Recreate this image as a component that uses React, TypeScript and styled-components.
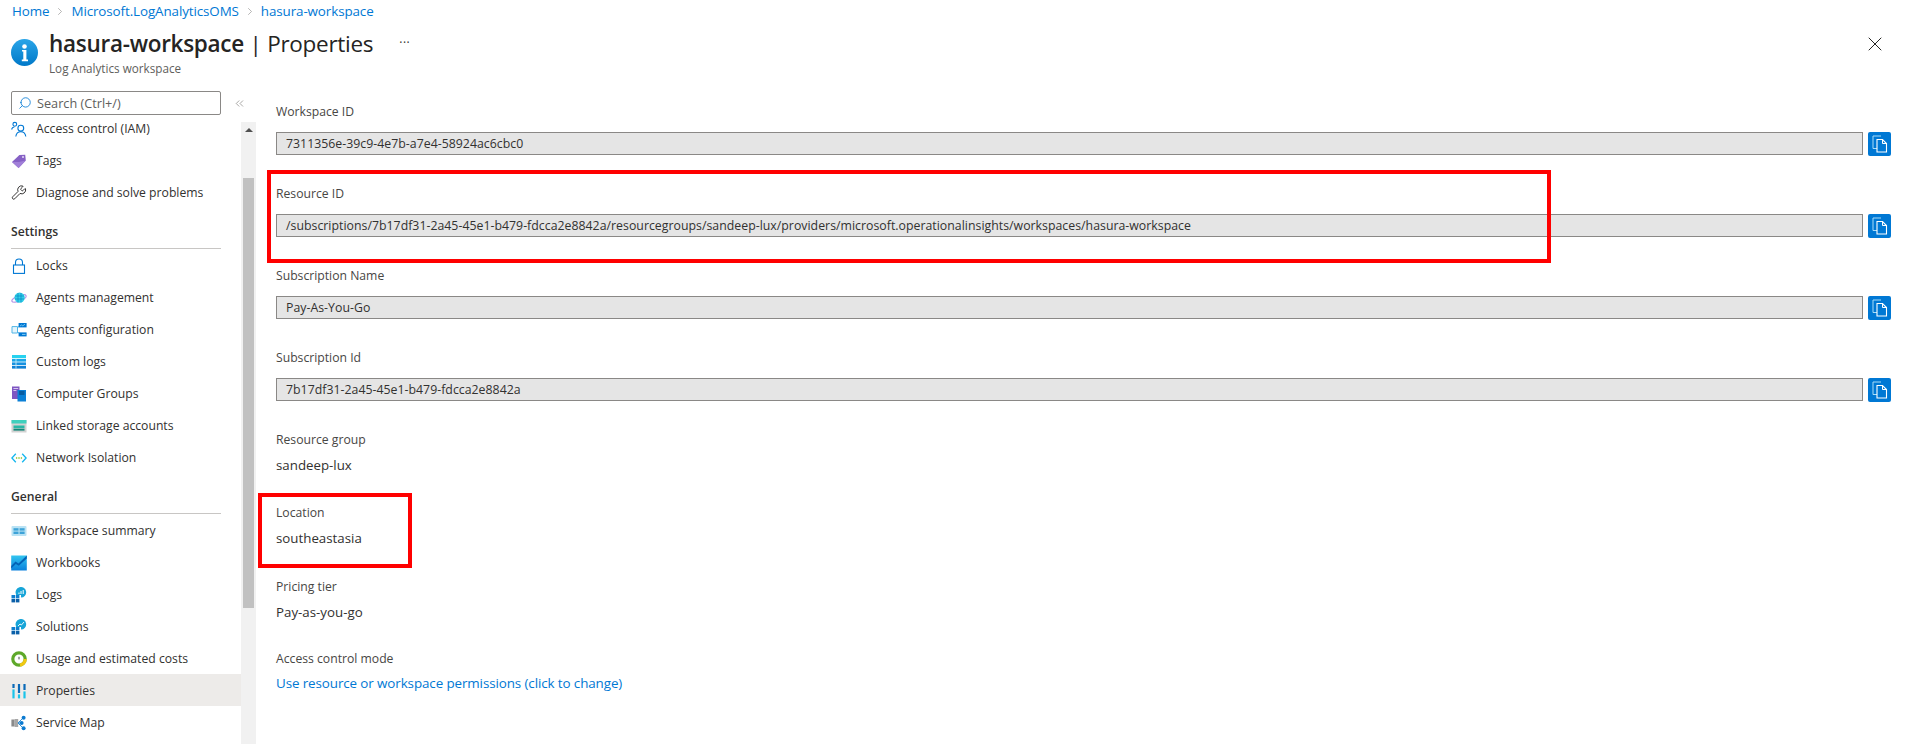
import React from "react";
import styled, { createGlobalStyle } from "styled-components";
import { ChevronRight, ChevronsLeft, Search, Wrench, X } from "lucide-react";

const Global = createGlobalStyle`
  html, body { margin: 0; padding: 0; background: #fff; }
  body { font-family: "Open Sans", "Noto Sans", "Liberation Sans", sans-serif; color: #323130; }
  * { box-sizing: border-box; }
`;

const Page = styled.div`
  width: 1906px;
  height: 744px;
  overflow: hidden;
  display: flex;
  flex-direction: column;
  background: #fff;
`;
const Breadcrumb = styled.nav`
  height: 22px;
  padding-left: 12px;
  display: flex;
  align-items: center;
  gap: 5px;
  font-size: 13.4px;
  color: #0078d4;
`;
const Crumb = styled.a`
  color: #0078d4;
  letter-spacing: -0.1px;
`;
const CrumbSep = styled.span`
  display: flex;
  width: 12px;
  justify-content: center;
  color: #8a8886;
`;
const Header = styled.header`
  height: 47px;
  display: flex;
  align-items: flex-start;
  padding-left: 11px;
  padding-right: 19px;
`;
const InfoBadge = styled.div`
  width: 27px;
  height: 27px;
  margin-top: 17px;
  flex: none;
`;
const TitleBlock = styled.div`
  margin-left: 11px;
  margin-top: 7px;
`;
const Title = styled.h1`
  margin: 0;
  font-size: 22.5px;
  line-height: 30px;
  font-weight: 400;
  color: #252423;
  white-space: nowrap;
  letter-spacing: -0.28px;
`;
const TitleStrong = styled.span`
  font-weight: 600;
`;
const Subtitle = styled.div`
  font-size: 11.7px;
  line-height: 16px;
  margin-top: 1px;
  color: #605e5c;
`;
const More = styled.div`
  margin-left: 26px;
  margin-top: 11px;
  font-size: 12px;
  line-height: 20px;
  letter-spacing: 0.5px;
  color: #323130;
`;
const CloseBtn = styled.div`
  margin-left: auto;
  margin-top: 10px;
  display: flex;
  color: #252423;
`;
const Body = styled.div`
  flex: 1;
  min-height: 0;
  display: flex;
`;
const Side = styled.aside`
  width: 256px;
  flex: none;
  display: flex;
  flex-direction: column;
  min-height: 0;
`;
const SearchRow = styled.div`
  display: flex;
  align-items: center;
  padding-left: 11px;
  margin-top: 22px;
  position: relative;
  z-index: 1;
`;
const SearchBox = styled.div`
  width: 210px;
  height: 24px;
  border: 1px solid #8a8886;
  border-radius: 2px;
  background: #fff;
  display: flex;
  align-items: center;
  gap: 5px;
  padding-left: 6px;
  font-size: 12.7px;
  color: #605e5c;
`;
const SearchGlyph = styled(Search)`
  transform: scaleX(-1);
  color: #0078d4;
`;
const Collapse = styled.div`
  margin-left: 12px;
  display: flex;
  color: #605e5c;
`;
const SideBody = styled.div`
  flex: 1;
  min-height: 0;
  margin-top: -3px;
  display: flex;
`;
const Menu = styled.div`
  width: 241px;
  flex: none;
  overflow: hidden;
`;
const Row = styled.div<{ $active?: boolean }>`
  height: 32px;
  display: flex;
  align-items: center;
  gap: 9px;
  padding: 1px 0 0 11px;
  font-size: 12.2px;
  color: #323130;
  white-space: nowrap;
  background: ${(p) => (p.$active ? "#edebe9" : "transparent")};
`;
const RowIcon = styled.span`
  width: 16px;
  height: 16px;
  flex: none;
  display: flex;
  align-items: center;
  justify-content: center;
`;
const Section = styled.div`
  height: 41px;
  margin: 0 20px 0 11px;
  padding-top: 15px;
  border-bottom: 1px solid #c8c6c4;
  font-size: 12.2px;
  line-height: 18px;
  font-weight: 600;
  color: #323130;
`;
const Track = styled.div`
  width: 15px;
  flex: none;
  margin-top: 10px;
  background: #f1f1f1;
  display: flex;
  flex-direction: column;
  align-items: center;
`;
const TrackArrow = styled.div`
  margin-top: 6px;
  width: 0;
  height: 0;
  border-left: 4px solid transparent;
  border-right: 4px solid transparent;
  border-bottom: 4px solid #505050;
`;
const Thumb = styled.div`
  margin-top: 46px;
  width: 11px;
  height: 430px;
  background: #c1c1c1;
`;
const Main = styled.main`
  flex: 1;
  min-width: 0;
  position: relative;
  padding: 33px 15px 0 20px;
`;
const Field = styled.section`
  height: 82px;
`;
const Label = styled.div`
  font-size: 12.2px;
  line-height: 20px;
  color: #484644;
`;
const CopyRow = styled.div`
  margin-top: 10px;
  display: flex;
  gap: 5px;
  align-items: flex-start;
`;
const ReadOnly = styled.div`
  flex: 1;
  height: 23px;
  border: 1px solid #8a8886;
  background: #e5e5e5;
  padding-left: 9px;
  font-size: 12.3px;
  line-height: 21px;
  color: #323130;
  white-space: nowrap;
  overflow: hidden;
  letter-spacing: 0.02px;
`;
const CopyBtn = styled.button`
  width: 23px;
  height: 24px;
  padding: 0;
  border: none;
  border-radius: 2px;
  background: #0078d4;
  display: flex;
  align-items: center;
  justify-content: center;
`;
const Plain = styled.section<{ $height: number }>`
  height: ${(p) => p.$height}px;
`;
const Value = styled.div`
  margin-top: 5px;
  font-size: 13.3px;
  line-height: 20px;
  color: #323130;
`;
const LinkValue = styled.a`
  display: block;
  margin-top: 4px;
  font-size: 13.4px;
  line-height: 20px;
  color: #0078d4;
  letter-spacing: -0.1px;
`;
const Callout = styled.div<{ $l: number; $t: number; $w: number; $h: number }>`
  position: absolute;
  left: ${(p) => p.$l}px;
  top: ${(p) => p.$t}px;
  width: ${(p) => p.$w}px;
  height: ${(p) => p.$h}px;
  border: 4px solid #ff0000;
  pointer-events: none;
`;

const Svg: React.FC<{ children: React.ReactNode; s?: number }> = ({ children, s = 16 }) => (
  <svg width={s} height={s} viewBox="0 0 16 16" fill="none">{children}</svg>
);

const InfoIcon = () => (
  <svg width="27" height="27" viewBox="0 0 27 27">
    <defs>
      <linearGradient id="ig" x1="0" y1="0" x2="0" y2="1">
        <stop offset="0" stopColor="#2aa5e8" />
        <stop offset="1" stopColor="#0078c8" />
      </linearGradient>
    </defs>
    <circle cx="13.5" cy="13.5" r="13.5" fill="url(#ig)" />
    <circle cx="13.5" cy="7.5" r="2.3" fill="#fff" />
    <path d="M11 11h4.4v9.6H17v1.6h-6.2v-1.6h1.5v-8H11z" fill="#fff" />
  </svg>
);
const IamIcon = () => (
  <Svg>
    <g stroke="#0078d4" strokeWidth="1.1">
      <circle cx="3.8" cy="3.3" r="1.9" />
      <path d="M0.6 8.5C1 6.8 2 6 3.4 6" />
      <circle cx="9.8" cy="7.2" r="2.9" />
      <path d="M4.8 15.5c.4-3 2.3-4.8 5-4.8s4.6 1.8 5 4.8" />
    </g>
  </Svg>
);
const TagIcon = () => (
  <Svg>
    <path d="M1 8.6 8.4 1.6 14.2 1.2 14.8 7 7.6 14.6 Z" fill="#8661c5" transform="translate(0 0.5)" />
    <path d="M1 9.1 7.6 15.1 14.8 7.5 8 9Z" fill="#a17fd8" />
    <circle cx="12" cy="4" r="1" fill="#e5dbf5" />
  </Svg>
);
const LockIcon = () => (
  <Svg>
    <path d="M4.5 7V4.5a3.5 3.5 0 0 1 7 0V7" stroke="#0078d4" strokeWidth="1.1" />
    <rect x="2.5" y="7" width="11" height="8.4" stroke="#0078d4" strokeWidth="1.1" />
  </Svg>
);
const AgentsMgmtIcon = () => (
  <Svg>
    <ellipse cx="8" cy="8.5" rx="7.6" ry="2.6" transform="rotate(-22 8 8.5)" stroke="#b796e6" strokeWidth="1.2" />
    <circle cx="8.6" cy="7.6" r="5.2" fill="#32d0e8" />
    <path d="M4 6h9M4 9h9M7 3v9.5M10 3v9.5" stroke="#0a88c4" strokeWidth=".7" />
  </Svg>
);
const AgentsConfigIcon = () => (
  <Svg>
    <path d="M1 4.6h5.5v6.4H1z" fill="#e6f5fc" stroke="#50b5e6" />
    <path d="M6 6 9 3.6M6 9.5l3 2.5" stroke="#50b5e6" />
    <rect x="7.6" y="1" width="8" height="4.4" fill="#0078d4" />
    <rect x="7.6" y="10.4" width="8" height="4" fill="#0078d4" />
    <path d="M9 4l1.5-1 1.3.8L14 2.2" stroke="#9fe0f8" strokeWidth=".7" />
    <path d="M11 12.4h3.5" stroke="#9fe0f8" strokeWidth=".8" />
  </Svg>
);
const LogsTableIcon = () => (
  <Svg>
    <rect x="1" y="1" width="14" height="3.2" fill="#27d2ef" />
    <rect x="1" y="5" width="14" height="2.6" fill="#1aa5e8" />
    <rect x="1" y="8.4" width="14" height="2.6" fill="#1591e0" />
    <rect x="1" y="11.8" width="14" height="2.8" fill="#0f80d4" />
    <rect x="4.6" y="5" width=".8" height="9.6" fill="#c8eefb" />
  </Svg>
);
const ComputerIcon = () => (
  <Svg>
    <rect x="1" y="0.5" width="7.5" height="12.5" fill="#7e56c2" />
    <path d="M2.4 2.5h4.8M2.4 4.5h3" stroke="#e0d4f4" strokeWidth=".9" />
    <rect x="6.5" y="4" width="8.5" height="11.5" fill="#0b80d6" />
    <path d="M8 6h5.5M8 8h5.5" stroke="#063b6e" strokeWidth="1" />
  </Svg>
);
const StorageIcon = () => (
  <Svg>
    <rect x="0.5" y="2" width="15" height="12.5" fill="#d2d2d2" />
    <rect x="0.5" y="2" width="15" height="3.5" fill="#3fd0bd" />
    <rect x="2.5" y="7.5" width="11" height="2.8" fill="#27b8a6" />
    <rect x="2.5" y="10.8" width="11" height="1.8" fill="#128778" />
  </Svg>
);
const NetworkIcon = () => (
  <Svg>
    <path d="M4.8 3.8.9 8l3.9 4.2M11.2 3.8 15.1 8l-3.9 4.2" stroke="#14b7ee" strokeWidth="1.3" />
    <circle cx="5.6" cy="8" r=".8" fill="#7fba00" />
    <circle cx="8" cy="8" r=".8" fill="#7fba00" />
    <circle cx="10.4" cy="8" r=".8" fill="#7fba00" />
  </Svg>
);
const SummaryIcon = () => (
  <Svg>
    <rect x="0.5" y="3" width="15" height="10" rx="1" fill="#b9e2f4" />
    <rect x="2.5" y="5.2" width="5" height="2.4" fill="#3ea3d8" />
    <rect x="8.6" y="5.2" width="5" height="2.4" fill="#3ea3d8" />
    <rect x="2.5" y="8.6" width="5" height="2.4" fill="#3ea3d8" />
    <rect x="8.6" y="8.6" width="5" height="2.4" fill="#3ea3d8" />
  </Svg>
);
const WorkbooksIcon = () => (
  <Svg>
    <defs>
      <linearGradient id="wb" x1="0" y1="0" x2="0" y2="1">
        <stop offset="0" stopColor="#32c5f0" />
        <stop offset="1" stopColor="#0a80dc" />
      </linearGradient>
    </defs>
    <rect x="0.2" y="0.5" width="15.6" height="15" fill="url(#wb)" />
    <path d="M0.2 11 4.5 6.6 7.5 8.6 15.8 0.5V3.5L7.8 10.8 4.8 9 0.2 13.5Z" fill="#0362b6" />
  </Svg>
);
const LogsIcon: React.FC<{ wave?: boolean }> = ({ wave }) => (
  <Svg>
    <rect x="0.5" y="8" width="3.6" height="3.4" fill="#0f7fcf" />
    <rect x="4.8" y="8" width="3.6" height="3.4" fill="#0f7fcf" />
    <rect x="0.5" y="12" width="3.6" height="3.4" fill="#0a5fa8" />
    <rect x="4.8" y="12" width="3.6" height="3.4" fill="#0a5fa8" />
    <path d="M5 7.4A5.3 5.3 0 1 1 10 10.6V8H5.2Z" fill="#17a5d8" />
    {wave ? (
      <path d="M7 7l2-2 1.4 1 2.6-3" stroke="#fff" strokeWidth=".9" />
    ) : (
      <path d="M8 7V5.5M10 7V4M12.2 7V3" stroke="#fff" strokeWidth="1" />
    )}
  </Svg>
);
const UsageIcon = () => (
  <Svg>
    <circle cx="8" cy="8" r="6.2" stroke="#5ea82a" strokeWidth="3.2" />
    <path d="M14.2 8A6.2 6.2 0 0 1 9 14.1" stroke="#f2c811" strokeWidth="3.2" />
    <circle cx="8" cy="8" r="3.6" fill="#fff" />
    <path d="M8 5.8V8.4" stroke="#444" strokeWidth="1" />
  </Svg>
);
const PropsIcon = () => (
  <Svg>
    <rect x="1.4" y="1" width="2.2" height="4" fill="#0b6ab8" />
    <rect x="1.4" y="6.4" width="2.2" height="9" fill="#19c4ea" />
    <rect x="6.9" y="1" width="2.2" height="9" fill="#0b6ab8" />
    <rect x="6.9" y="11.4" width="2.2" height="4" fill="#19c4ea" />
    <rect x="12.4" y="1" width="2.2" height="6" fill="#0b6ab8" />
    <rect x="12.4" y="8.4" width="2.2" height="7" fill="#19c4ea" />
  </Svg>
);
const ServiceMapIcon = () => (
  <Svg>
    <rect x="0.4" y="4.5" width="3.2" height="7" fill="#8a8a8a" />
    <rect x="3.6" y="4" width="3.6" height="8" fill="#a6a6a6" />
    <path d="M7 8h3M7 8l5-5M7 8l5 5" stroke="#2c8fd8" strokeWidth="1" />
    <circle cx="12.6" cy="2.8" r="2" fill="#0b7ad0" />
    <circle cx="10.6" cy="8" r="2" fill="#0b7ad0" />
    <circle cx="12.6" cy="13.2" r="2" fill="#0b7ad0" />
  </Svg>
);
const CopyIcon = () => (
  <svg width="16" height="18" viewBox="0 0 16 18" fill="none">
    <path d="M9 1H1v12.5h4" stroke="#a8dcf8" strokeWidth="1" />
    <path d="M5 4.5h5.5l4 4v8.5H5z" fill="#0078d4" stroke="#fff" strokeWidth="1.1" />
    <path d="M10.5 4.5v4h4" stroke="#fff" strokeWidth="1" />
  </svg>
);

type Item = { label: string; icon: React.ReactNode; active?: boolean };
const top: Item[] = [
  { label: "Access control (IAM)", icon: <IamIcon /> },
  { label: "Tags", icon: <TagIcon /> },
  { label: "Diagnose and solve problems", icon: <Wrench size={17} strokeWidth={1.4} color="#252423" /> },
];
const settings: Item[] = [
  { label: "Locks", icon: <LockIcon /> },
  { label: "Agents management", icon: <AgentsMgmtIcon /> },
  { label: "Agents configuration", icon: <AgentsConfigIcon /> },
  { label: "Custom logs", icon: <LogsTableIcon /> },
  { label: "Computer Groups", icon: <ComputerIcon /> },
  { label: "Linked storage accounts", icon: <StorageIcon /> },
  { label: "Network Isolation", icon: <NetworkIcon /> },
];
const general: Item[] = [
  { label: "Workspace summary", icon: <SummaryIcon /> },
  { label: "Workbooks", icon: <WorkbooksIcon /> },
  { label: "Logs", icon: <LogsIcon /> },
  { label: "Solutions", icon: <LogsIcon wave /> },
  { label: "Usage and estimated costs", icon: <UsageIcon /> },
  { label: "Properties", icon: <PropsIcon />, active: true },
  { label: "Service Map", icon: <ServiceMapIcon /> },
];
const copyFields = [
  ["Workspace ID", "7311356e-39c9-4e7b-a7e4-58924ac6cbc0"],
  ["Resource ID", "/subscriptions/7b17df31-2a45-45e1-b479-fdcca2e8842a/resourcegroups/sandeep-lux/providers/microsoft.operationalinsights/workspaces/hasura-workspace"],
  ["Subscription Name", "Pay-As-You-Go"],
  ["Subscription Id", "7b17df31-2a45-45e1-b479-fdcca2e8842a"],
];

const Rows: React.FC<{ items: Item[] }> = ({ items }) => (
  <>
    {items.map((i) => (
      <Row key={i.label} $active={i.active}>
        <RowIcon>{i.icon}</RowIcon>
        {i.label}
      </Row>
    ))}
  </>
);

export default function App() {
  return (
    <Page>
      <Global />
      <Breadcrumb>
        <Crumb>Home</Crumb>
        <CrumbSep><ChevronRight size={13} strokeWidth={1.2} /></CrumbSep>
        <Crumb>Microsoft.LogAnalyticsOMS</Crumb>
        <CrumbSep><ChevronRight size={13} strokeWidth={1.2} /></CrumbSep>
        <Crumb>hasura-workspace</Crumb>
      </Breadcrumb>
      <Header>
        <InfoBadge><InfoIcon /></InfoBadge>
        <TitleBlock>
          <Title><TitleStrong>hasura-workspace</TitleStrong> | Properties</Title>
          <Subtitle>Log Analytics workspace</Subtitle>
        </TitleBlock>
        <More>···</More>
        <CloseBtn><X size={24} strokeWidth={1} /></CloseBtn>
      </Header>
      <Body>
        <Side>
          <SearchRow>
            <SearchBox>
              <SearchGlyph size={14} strokeWidth={1.4} />
              Search (Ctrl+/)
            </SearchBox>
            <Collapse><ChevronsLeft size={13} strokeWidth={1} /></Collapse>
          </SearchRow>
          <SideBody>
            <Menu>
              <Rows items={top} />
              <Section>Settings</Section>
              <Rows items={settings} />
              <Section>General</Section>
              <Rows items={general} />
            </Menu>
            <Track>
              <TrackArrow />
              <Thumb />
            </Track>
          </SideBody>
        </Side>
        <Main>
          {copyFields.map(([l, v]) => (
            <Field key={l}>
              <Label>{l}</Label>
              <CopyRow>
                <ReadOnly>{v}</ReadOnly>
                <CopyBtn><CopyIcon /></CopyBtn>
              </CopyRow>
            </Field>
          ))}
          <Plain $height={73}>
            <Label>Resource group</Label>
            <Value>sandeep-lux</Value>
          </Plain>
          <Plain $height={74}>
            <Label>Location</Label>
            <Value>southeastasia</Value>
          </Plain>
          <Plain $height={72}>
            <Label>Pricing tier</Label>
            <Value>Pay-as-you-go</Value>
          </Plain>
          <Plain $height={50}>
            <Label>Access control mode</Label>
            <LinkValue>Use resource or workspace permissions (click to change)</LinkValue>
          </Plain>
          <Callout $l={11} $t={101} $w={1284} $h={93} />
          <Callout $l={2} $t={424} $w={154} $h={75} />
        </Main>
      </Body>
    </Page>
  );
}
